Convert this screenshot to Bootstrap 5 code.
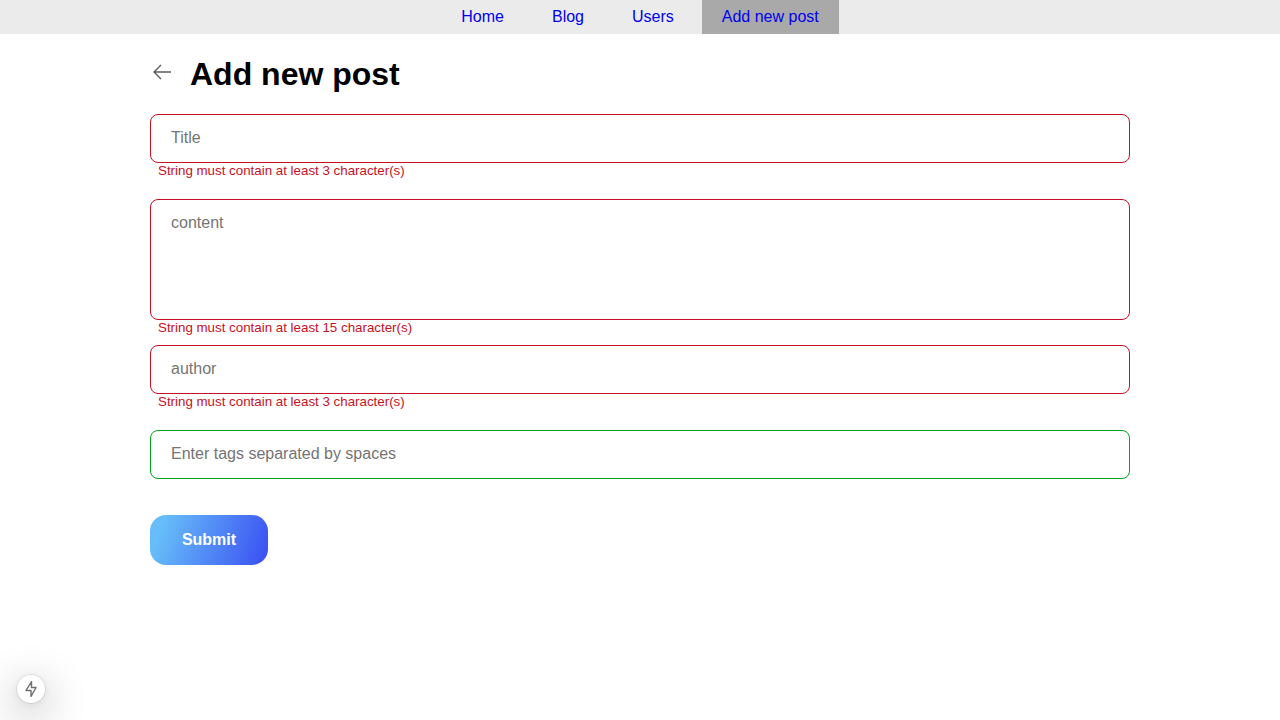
<!DOCTYPE html>
<html lang="en">
<head>
<meta charset="utf-8">
<title>Add new post</title>
<meta name="viewport" content="width=device-width, initial-scale=1">
<link href="https://cdn.jsdelivr.net/npm/bootstrap@5.3.0/dist/css/bootstrap.min.css" rel="stylesheet">
<style>
body{font-family:"Liberation Sans",Arial,sans-serif;font-size:16px;line-height:18px;color:#000;min-height:100vh;overflow:hidden}
.topbar{background:#ebebeb;height:34px;gap:8px}
.topbar .nav-link{color:#00e;padding:8px 20px;line-height:18px}
.topbar .nav-link.active{background:#a9a9a9}
.page{width:980px}
.heading{padding-top:21px;gap:16px}
.heading svg{margin-top:5px}
.page h1{font-size:32px;font-weight:700;line-height:37px;margin:1px 0 0}
.page form{padding-top:21px}
.page .form-control{display:block;border:1px solid #c81025;border-radius:8px;padding:11px 20px 13px;height:49px;font-size:16px;line-height:22px;resize:none;color:#000;background:#fff}
.page .form-control::placeholder{color:#757575}
.page .form-control.valid{border-color:#00a31a}
.page textarea.form-control{height:121px;padding-top:12px}
.error{color:#c81025;font-size:13.333px;line-height:15px;height:15px;padding-left:8px}
.gap-wide{margin-top:21px}
.gap-tight{margin-top:10px}
.submit{width:118px;height:50px;margin-top:36px;border:0;border-radius:16px;color:#fff;font-weight:700;background:linear-gradient(110deg,#66bdf9 12%,#3b50f2 98%)}
.devtool{left:17px;bottom:17px;width:28px;height:28px;background:#fff;box-shadow:0 0 0 1px rgba(0,0,0,.08),0 11px 40px 5px rgba(0,0,0,.22),0 2px 10px 0 rgba(0,0,0,.08)}
</style>
</head>
<body>
<nav class="topbar nav d-flex justify-content-center">
<a class="nav-link" href="#">Home</a><a class="nav-link" href="#">Blog</a><a class="nav-link" href="#">Users</a><a class="nav-link active" href="#">Add new post</a>
</nav>
<main class="page mx-auto">
<header class="heading d-flex align-items-start">
<svg width="24" height="24" viewBox="0 0 24 24" fill="none" stroke="#5c5c5c" stroke-width="1.4"><path d="M21 12H4M11 5 4 12l7 7"/></svg>
<h1>Add new post</h1>
</header>
<form novalidate>
<input class="form-control" placeholder="Title"><div class="error">String must contain at least 3 character(s)</div>
<textarea class="form-control gap-wide" placeholder="content"></textarea><div class="error">String must contain at least 15 character(s)</div>
<input class="form-control gap-tight" placeholder="author"><div class="error">String must contain at least 3 character(s)</div>
<input class="form-control valid gap-wide" placeholder="Enter tags separated by spaces">
<button class="submit" type="button">Submit</button>
</form>
</main>
<div class="devtool position-fixed rounded-circle d-flex align-items-center justify-content-center">
<svg width="16" height="18" viewBox="0 0 16 18" fill="none" stroke="#707070" stroke-width="1.4" stroke-linejoin="round"><path d="M8.500 1.700v5.800h4.600L8 16.300v-5.800H3z"/></svg>
</div>
<script src="https://cdn.jsdelivr.net/npm/bootstrap@5.3.0/dist/js/bootstrap.bundle.min.js"></script>
</body>
</html>
